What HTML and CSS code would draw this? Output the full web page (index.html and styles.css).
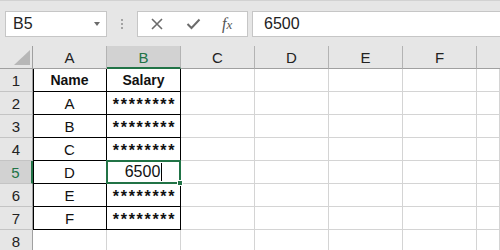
FILE: index.html
```html
<!DOCTYPE html>
<html>
<head>
<meta charset="utf-8">
<link rel="stylesheet" href="styles.css">
</head>
<body>
<div class="app">
  <div class="toolbar">
    <div class="namebox"><span class="nb-text">B5</span><span class="nb-caret"></span></div>
    <div class="grip"><span></span><span></span><span></span></div>
    <div class="fbtns">
      <svg class="ico" width="14" height="14" viewBox="0 0 14 14"><path d="M2 2 L12 12 M12 2 L2 12" stroke="#6b6b6b" stroke-width="1.6" fill="none"/></svg>
      <svg class="ico" width="15" height="12" viewBox="0 0 15 12"><path d="M1.5 6 L5.5 10 L13.5 1.5" stroke="#6b6b6b" stroke-width="2" fill="none"/></svg>
      <span class="fx">f<i>x</i></span>
    </div>
    <div class="finput">6500</div>
  </div>
  <div class="sheet">
    <div class="ch corner"><span class="tri"></span></div>
    <div class="ch">A</div>
    <div class="ch sel">B</div>
    <div class="ch">C</div>
    <div class="ch">D</div>
    <div class="ch">E</div>
    <div class="ch">F</div>
    <div class="ch last"></div>

    <div class="rh">1</div>
    <div class="c ta b">Name</div>
    <div class="c tb b">Salary</div>
    <div class="c"></div><div class="c"></div><div class="c"></div><div class="c"></div><div class="c"></div>

    <div class="rh">2</div>
    <div class="c ta">A</div>
    <div class="c tb ast">********</div>
    <div class="c"></div><div class="c"></div><div class="c"></div><div class="c"></div><div class="c"></div>

    <div class="rh">3</div>
    <div class="c ta">B</div>
    <div class="c tb ast">********</div>
    <div class="c"></div><div class="c"></div><div class="c"></div><div class="c"></div><div class="c"></div>

    <div class="rh">4</div>
    <div class="c ta">C</div>
    <div class="c tb ast">********</div>
    <div class="c"></div><div class="c"></div><div class="c"></div><div class="c"></div><div class="c"></div>

    <div class="rh sel">5</div>
    <div class="c ta">D</div>
    <div class="c tb active"><span class="val">6500<span class="cursor"></span></span><span class="selbox"><span class="handle"></span></span></div>
    <div class="c"></div><div class="c"></div><div class="c"></div><div class="c"></div><div class="c"></div>

    <div class="rh">6</div>
    <div class="c ta">E</div>
    <div class="c tb ast">********</div>
    <div class="c"></div><div class="c"></div><div class="c"></div><div class="c"></div><div class="c"></div>

    <div class="rh">7</div>
    <div class="c ta">F</div>
    <div class="c tb ast">********</div>
    <div class="c"></div><div class="c"></div><div class="c"></div><div class="c"></div><div class="c"></div>

    <div class="rh">8</div>
    <div class="c"></div><div class="c"></div>
    <div class="c"></div><div class="c"></div><div class="c"></div><div class="c"></div><div class="c"></div>
  </div>
</div>
</body>
</html>
```
FILE: styles.css
```css
* { box-sizing: border-box; }
html, body { margin: 0; padding: 0; }
body {
  width: 500px;
  height: 250px;
  overflow: hidden;
  background: #e6e6e6;
  font-family: "Liberation Sans", Arial, sans-serif;
  color: #111;
}
.app { width: 500px; height: 250px; overflow: hidden; }

.toolbar {
  height: 46px;
  border-top: 1px solid #d2d2d2;
  padding-top: 10px;
  display: flex;
  align-items: flex-start;
}
.namebox {
  margin-left: 5px;
  width: 102px;
  height: 26px;
  background: #fff;
  border: 1px solid #c6c6c6;
  display: flex;
  align-items: center;
  justify-content: space-between;
  padding: 0 6px 0 7px;
}
.nb-text { font-size: 16px; color: #222; }
.nb-caret {
  width: 0; height: 0;
  border-left: 3.5px solid transparent;
  border-right: 3.5px solid transparent;
  border-top: 4px solid #6b6b6b;
}
.grip {
  width: 30px;
  height: 26px;
  display: flex;
  flex-direction: column;
  align-items: center;
  justify-content: center;
  gap: 2px;
}
.grip span { width: 2px; height: 2px; background: #a3a3a3; }
.fbtns {
  width: 111px;
  height: 26px;
  background: #fff;
  border: 1px solid #c6c6c6;
  display: flex;
  align-items: center;
  padding-left: 12px;
  gap: 22px;
}
.fx {
  font-family: "Liberation Serif", "Times New Roman", serif;
  font-style: italic;
  font-size: 16px;
  color: #555;
  margin-left: -1px;
}
.fx i { font-size: 13px; }
.finput {
  margin-left: 4px;
  flex: 1;
  height: 26px;
  background: #fff;
  border: 1px solid #c6c6c6;
  border-right: none;
  font-size: 16px;
  color: #222;
  line-height: 24px;
  padding-left: 11px;
}

.sheet {
  display: grid;
  grid-template-columns: 33px repeat(6, 74px) 1fr;
  grid-auto-rows: 23px;
}
.ch {
  background: #e6e6e6;
  border-right: 1px solid #b3b3b3;
  border-bottom: 1px solid #a0a0a0;
  font-size: 15px;
  color: #222;
  display: flex;
  align-items: center;
  justify-content: center;
  padding-top: 1px;
}
.ch.last { border-right: none; }
.ch.sel {
  background: #d2d2d2;
  color: #217346;
  border-bottom: 2px solid #217346;
}
.corner { position: relative; border-right: 1px solid #a0a0a0; }
.tri {
  position: absolute;
  right: 2px;
  bottom: 3px;
  width: 16px;
  height: 15px;
  background: #b7b7b7;
  clip-path: polygon(100% 0, 100% 100%, 0 100%);
}
.rh {
  background: #e6e6e6;
  border-right: 1px solid #a0a0a0;
  border-bottom: 1px solid #c4c4c4;
  font-size: 15px;
  color: #222;
  display: flex;
  align-items: center;
  justify-content: center;
}
.rh.sel {
  background: #d2d2d2;
  color: #217346;
  border-right: 2px solid #217346;
}
.c {
  background: #fff;
  border-right: 1px solid #d4d4d4;
  border-bottom: 1px solid #d4d4d4;
  font-size: 15px;
  color: #111;
  display: flex;
  align-items: center;
  justify-content: center;
}
.c.ta, .c.tb { border-right-color: #000; border-bottom-color: #000; }
.c.ta { box-shadow: inset 1px 0 0 #000; }
.c.b { font-weight: bold; font-size: 14px; }
.c.ast {
  font-weight: bold;
  font-size: 16px;
  letter-spacing: 1.7px;
  padding-left: 2px;
  padding-top: 4px;
}
.active { position: relative; }
.val { font-size: 16px; display: inline-flex; align-items: center; }
.cursor {
  display: inline-block;
  width: 1px;
  height: 18px;
  background: #000;
  margin-left: 1px;
}
.selbox {
  position: absolute;
  left: -1px;
  top: -1px;
  right: -1px;
  bottom: -1px;
  border: 2px solid #217346;
}
.handle {
  position: absolute;
  right: -4px;
  bottom: -4px;
  width: 6px;
  height: 6px;
  background: #217346;
  border: 1px solid #fff;
}
```
